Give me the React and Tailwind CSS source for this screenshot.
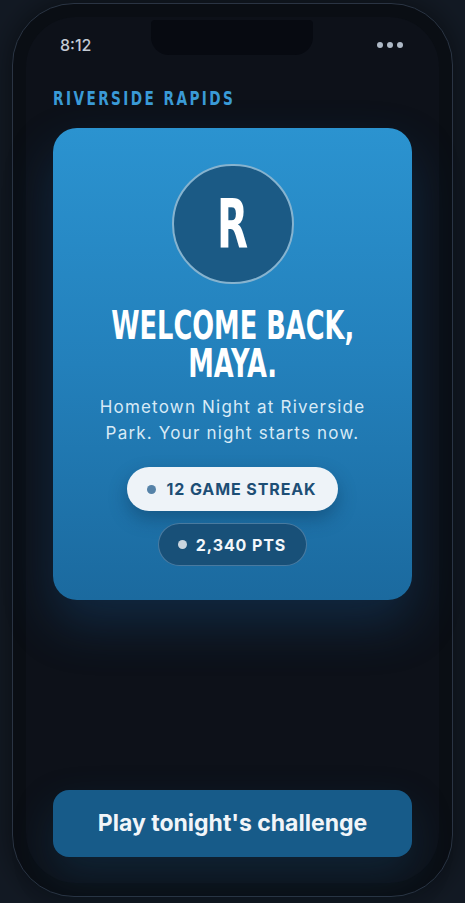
import React from 'react';

const display = { fontFamily: '"Liberation Sans Narrow", "DejaVu Sans Condensed", "Liberation Sans", sans-serif' };
const ui = { fontFamily: 'Inter, "Noto Sans", "Liberation Sans", sans-serif' };

const StatPill = ({ label, light }) => (
  <div
    className={
      light
        ? 'flex items-center gap-[10px] rounded-full bg-[#eef3f8] pl-[20px] pr-[21px] h-[44px] shadow-[0_8px_18px_rgba(8,40,70,0.35)]'
        : 'flex items-center gap-[9px] rounded-full bg-[#184d73]/90 border border-[#5f8db0]/70 pl-[19px] pr-[20px] h-[43px]'
    }
  >
    <span className={light ? 'w-[9px] h-[9px] rounded-full bg-[#5582a8]' : 'w-[9px] h-[9px] rounded-full bg-[#c9d5df]'} />
    <span
      className={
        light
          ? 'text-[16px] font-bold tracking-[0.9px] text-[#1d4e75]'
          : 'text-[16px] font-bold tracking-[0.9px] text-[#f3f7fb]'
      }
    >
      {label}
    </span>
  </div>
);

const App = () => {
  return (
    <div className="w-full h-[903px] bg-[#131a24] overflow-hidden" style={ui}>
      <div className="ml-[12px] mt-[3px] w-[441px] h-[894px] rounded-[62px] border border-[#2a3443] bg-[#0a0e14] p-[13px] shadow-[0_0_30px_rgba(0,0,0,0.5)]">
        <div className="relative h-full rounded-[50px] bg-[#0d1119] flex flex-col px-[27px]">
          {/* notch */}
          <div className="absolute left-[125px] top-[3px] w-[162px] h-[35px] rounded-b-[18px] rounded-t-[4px] bg-[#070a11]" />

          <div className="flex items-center justify-between pt-[16px] px-[7px] h-[40px]">
            <span className="text-[16px] font-medium text-[#c3cad3]">8:12</span>
            <div className="flex items-center gap-[4px] pr-[2px]">
              <span className="w-[6px] h-[6px] rounded-full bg-[#aeb9c6]" />
              <span className="w-[6px] h-[6px] rounded-full bg-[#aeb9c6]" />
              <span className="w-[6px] h-[6px] rounded-full bg-[#aeb9c6]" />
            </div>
          </div>

          <div className="mt-[31px] h-[20px] flex items-center">
            <span
              className="text-[19px] font-bold tracking-[3px] text-[#3a9ad6] inline-block origin-left scale-x-[0.8] scale-y-[1.05] whitespace-nowrap"
              style={display}
            >
              RIVERSIDE RAPIDS
            </span>
          </div>

          <div className="mt-[20px] h-[472px] rounded-[24px] bg-gradient-to-b from-[#2b93d0] via-[#2380bb] to-[#1b6a9f] flex flex-col items-center pt-[36px] pb-[34px] shadow-[0_24px_50px_rgba(25,90,150,0.32)]">
            <div className="w-[122px] h-[122px] rounded-full bg-[#1b5a85] border-2 border-[#86b3cf] flex items-center justify-center">
              <span className="text-[51px] font-bold text-white leading-none inline-block scale-x-[0.88] scale-y-[1.34]" style={display}>
                R
              </span>
            </div>

            <h1
              className="mt-[28px] mb-[6px] text-center text-[34px] font-bold text-white leading-[33px] scale-x-[0.84] scale-y-[1.16] whitespace-nowrap"
              style={display}
            >
              WELCOME BACK,
              <br />
              MAYA.
            </h1>

            <p className="mt-[10px] text-center text-[17px] leading-[26px] tracking-[1.2px] text-[#d8eaf6] whitespace-nowrap">
              Hometown Night at Riverside
              <br />
              Park. Your night starts now.
            </p>

            <div className="mt-[21px]">
              <StatPill label="12 GAME STREAK" light />
            </div>
            <div className="mt-[12px]">
              <StatPill label="2,340 PTS" />
            </div>
          </div>

          <div className="flex-1" />

          <button className="mb-[26px] h-[67px] w-full rounded-[16px] bg-[#175b89] text-[23px] font-bold text-[#f1f5f9] shadow-[0_18px_40px_rgba(23,91,137,0.25)]">
            Play tonight's challenge
          </button>
        </div>
      </div>
    </div>
  );
};

export default App;
